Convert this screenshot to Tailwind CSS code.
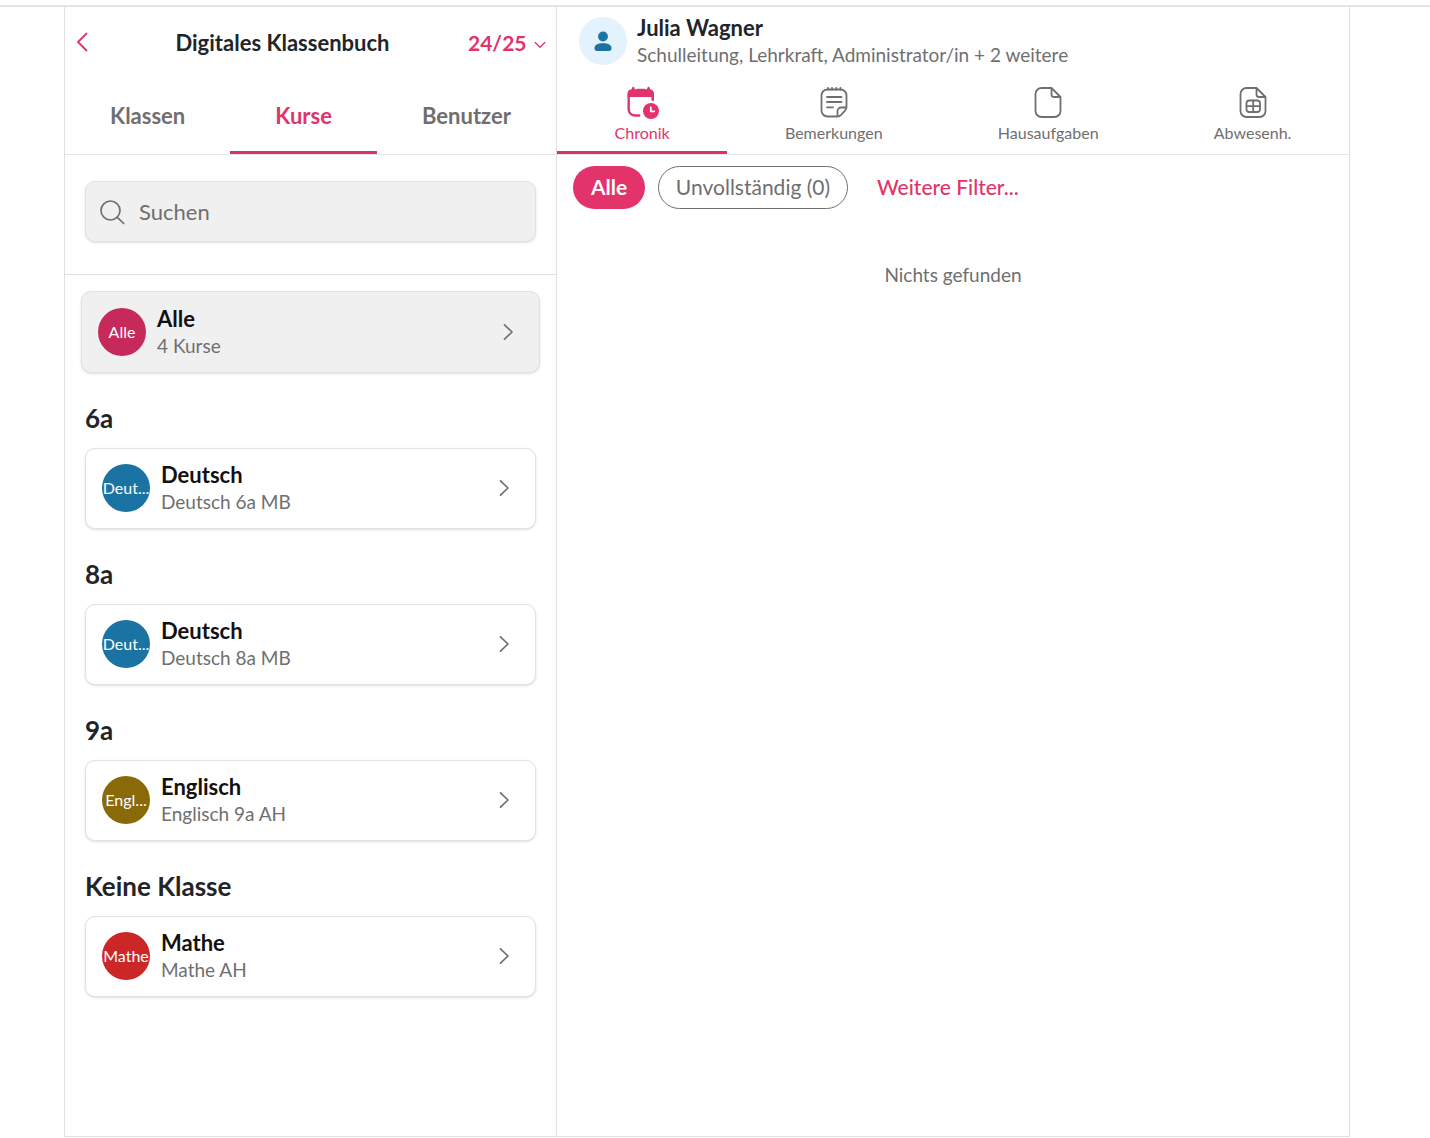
<!DOCTYPE html>
<html lang="de">
<head>
    <meta charset="UTF-8">
    <meta name="viewport" content="width=device-width, initial-scale=1.0">
    <title>Digitales Klassenbuch</title>
    <script src="https://cdn.jsdelivr.net/npm/@tailwindcss/browser@4"></script>
</head>
<body class="min-h-screen bg-white font-['Lato',sans-serif] text-[#212529] flex flex-col pt-[5px] pb-px">
    <div class="flex-1 flex flex-col border-t-2 border-[#e4e4e4] pl-16 pr-20">
        <div class="flex-1 flex border border-t-0 border-[#e0e0e0]">

            <!-- Course list -->
            <aside class="w-[492px] shrink-0 border-r border-[#e0e0e0]">
                <header class="h-[148px] flex flex-col border-b border-[#e4e4e4]">
                    <div class="h-[72px] flex items-center">
                        <button type="button" aria-label="Zurück" class="w-8 h-8 pl-[11px] pb-0.5 flex items-center text-[#e2336b]">
                            <svg class="w-3 h-5" viewBox="0 0 12 20" fill="none" stroke="currentColor" stroke-width="1.8" stroke-linecap="round" stroke-linejoin="round"><path d="M10.5 1.5 2 10l8.5 8.5"/></svg>
                        </button>
                        <h1 class="flex-1 text-center text-[22px] leading-7 font-bold">Digitales Klassenbuch</h1>
                        <div class="relative w-[88px] text-[#e2336b]">
                            <select aria-label="Schuljahr" class="block appearance-none w-full bg-transparent text-[21px] leading-7 font-bold">
                                <option>24/25</option>
                            </select>
                            <svg class="absolute right-2.5 top-2.5 w-3 h-3 pointer-events-none" viewBox="0 0 12 12" fill="none" stroke="currentColor" stroke-width="1.3" stroke-linecap="round" stroke-linejoin="round"><path d="M1.2 3.5 6 8.3l4.8-4.8"/></svg>
                        </div>
                    </div>
                    <nav class="flex-1 flex text-[22px] leading-7 font-bold text-[#6f6f6f]">
                        <a href="#" class="flex-auto flex items-center justify-center pt-0.5 border-b-3 border-transparent">Klassen</a>
                        <a href="#" class="flex-auto flex items-center justify-center pt-0.5 border-b-3 border-[#d6336b] text-[#e2336b]">Kurse</a>
                        <a href="#" class="flex-auto flex items-center justify-center pt-0.5 border-b-3 border-transparent">Benutzer</a>
                    </nav>
                </header>

                <div class="h-[120px] px-5 pt-[26px] border-b border-[#e0e0e0]">
                    <div class="h-[61px] flex items-center rounded-[10px] border border-[#e2e2e2] bg-[#f0f0f0] shadow-sm pl-[13px] pr-4 gap-3.5">
                        <svg class="w-[26px] h-[26px] shrink-0 text-[#6f6f6f]" viewBox="0 0 26 26" fill="none" stroke="currentColor" stroke-width="1.7" stroke-linecap="round"><circle cx="11.5" cy="11.5" r="9.5"/><path d="m18.3 18.3 6.4 6.2"/></svg>
                        <input type="text" aria-label="Suchen" placeholder="Suchen" class="flex-1 min-w-0 bg-transparent outline-none text-[22px] leading-7 placeholder:text-[#6f6f6f]">
                    </div>
                </div>

                <div class="px-4 pt-4">
                    <button type="button" class="w-full h-[82px] flex items-center text-left rounded-[10px] border border-[#e2e2e2] bg-[#f0f0f0] shadow-sm px-4">
                        <span class="w-12 h-12 shrink-0 rounded-full bg-[#c62a5a] text-white text-base flex items-center justify-center">Alle</span>
                        <span class="flex-1 ml-[11px]">
                            <span class="block text-[22px] leading-7 font-bold text-[#111]">Alle</span>
                            <span class="block text-[19px] leading-[26px] text-[#6f6f6f]">4 Kurse</span>
                        </span>
                        <svg class="w-5 h-5 mr-[5px] text-[#6f6f6f]" viewBox="0 0 20 20" fill="none" stroke="currentColor" stroke-width="1.7" stroke-linecap="round" stroke-linejoin="round"><path d="m6.5 2.8 7.5 7.2-7.5 7.2"/></svg>
                    </button>
                </div>

                <div id="groups" class="px-5 pb-8"></div>
            </aside>

            <!-- Person -->
            <main class="flex-1 min-w-0">
                <header class="h-[148px] flex flex-col border-b border-[#e4e4e4]">
                    <div class="h-[70px] flex items-center pl-[22px] pb-[3px] gap-2.5">
                        <span class="w-12 h-12 shrink-0 rounded-full bg-[#e3f2fd] text-[#1a73a2] flex items-center justify-center">
                            <svg class="w-6 h-6" viewBox="0 0 24 24" fill="currentColor"><circle cx="12" cy="7.5" r="4.9"/><path d="M3.5 19.3c0-3.500 3-5 8.500-5s8.500 1.500 8.500 5c0 1.600-.9 2.700-2.400 2.700H5.900c-1.500 0-2.400-1.100-2.400-2.700Z"/></svg>
                        </span>
                        <div>
                            <h2 class="text-[22px] leading-7 font-bold">Julia Wagner</h2>
                            <p class="text-[19px] leading-[26px] text-[#6f6f6f]">Schulleitung, Lehrkraft, Administrator/in + 2 weitere</p>
                        </div>
                    </div>
                    <nav class="flex-1 flex text-base leading-5 text-[#6f6f6f]">
                        <a href="#" class="flex-auto flex flex-col items-center pt-2 gap-0.5 border-b-3 border-[#d6336b] text-[#e2336b]">
                            <svg class="w-9 h-9" viewBox="0 0 36 36" fill="none">
                                <path d="M3.500 12V8.500c0-2.400 1.500-4 4-4.300L8.200 2.600a1.200 1.200 0 0 1 2.300.4l.2 1.200h1.500l1-.5h7.400l1 .5h1.500l.2-1.200a1.200 1.200 0 0 1 2.300-.4l.7 1.600c2.300.4 3.700 1.900 3.700 4.300v7.800c-.9-.6-1.700-.9-2.600-1.100V12Z" fill="currentColor"/>
                                <path d="M4.700 11v13.500a6 6 0 0 0 6 6h4.500" stroke="currentColor" stroke-width="2.400" stroke-linecap="round"/>
                                <circle cx="27" cy="26" r="8" fill="currentColor"/>
                                <path d="M26.800 22.500v3.800h3.400" stroke="#fff" stroke-width="1.800" stroke-linecap="round" stroke-linejoin="round"/>
                            </svg>
                            Chronik
                        </a>
                        <a href="#" class="flex-auto flex flex-col items-center pt-2 gap-0.5 border-b-3 border-transparent">
                            <svg class="w-9 h-9" viewBox="0 0 36 36" fill="none" stroke="currentColor" stroke-width="1.8" stroke-linecap="round" stroke-linejoin="round">
                                <path d="M30.500 22V10.500a6 6 0 0 0-6-6h-13a6 6 0 0 0-6 6v15a6 6 0 0 0 6 6h9.800c1.700 0 2.600-.5 3.800-1.700l3.700-3.900c1.200-1.200 1.700-2.200 1.700-3.900ZM21.500 31.200V26a3.500 3.500 0 0 1 3.500-3.500h5.200"/>
                                <path d="M12 4.500V2.800M16 4.500V2.800M20.300 4.500V2.800M24.500 4.500V2.800M11 12h14.500M11 17h14.500M11 22.300h6"/>
                            </svg>
                            Bemerkungen
                        </a>
                        <a href="#" class="flex-auto flex flex-col items-center pt-2 gap-0.5 border-b-3 border-transparent">
                            <svg class="w-9 h-9" viewBox="0 0 36 36" fill="none" stroke="currentColor" stroke-width="1.8" stroke-linecap="round" stroke-linejoin="round">
                                <path d="M21.500 3H11.500a6 6 0 0 0-6 6v17a6 6 0 0 0 6 6h13a6 6 0 0 0 6-6V12ZM21.500 3v6.500A2.500 2.500 0 0 0 24 12h6.500"/>
                            </svg>
                            Hausaufgaben
                        </a>
                        <a href="#" class="flex-auto flex flex-col items-center pt-2 gap-0.5 border-b-3 border-transparent">
                            <svg class="w-9 h-9" viewBox="0 0 36 36" fill="none" stroke="currentColor" stroke-width="1.8" stroke-linecap="round" stroke-linejoin="round">
                                <path d="M21.500 3H11.500a6 6 0 0 0-6 6v17a6 6 0 0 0 6 6h13a6 6 0 0 0 6-6V12ZM21.500 3v6.500A2.500 2.500 0 0 0 24 12h6.500"/>
                                <rect x="11.500" y="15.500" width="13.500" height="11.500" rx="2.800"/>
                                <path d="M11.500 21.200H25M18.200 15.500V27"/>
                            </svg>
                            Abwesenh.
                        </a>
                    </nav>
                </header>

                <div class="flex items-center px-4 pt-[11px] text-[21px] leading-7">
                    <button type="button" class="h-[43px] w-[72px] pb-0.5 rounded-full bg-[#e2336b] text-white font-bold">Alle</button>
                    <button type="button" class="h-[43px] w-[190px] pb-0.5 ml-[13px] rounded-full border border-[#6f6f6f] text-[#6f6f6f]">Unvollständig (0)</button>
                    <button type="button" class="h-[43px] pb-0.5 ml-[29px] font-medium text-[#e2336b]">Weitere Filter...</button>
                </div>

                <p class="mt-[53px] text-center text-[19px] leading-[26px] text-[#6f6f6f]">Nichts gefunden</p>
            </main>
        </div>
    </div>

    <script>
        const groups = [
            { name: '6a', short: 'Deut...', color: 'bg-[#1a73a2]', title: 'Deutsch', sub: 'Deutsch 6a MB' },
            { name: '8a', short: 'Deut...', color: 'bg-[#1a73a2]', title: 'Deutsch', sub: 'Deutsch 8a MB' },
            { name: '9a', short: 'Engl...', color: 'bg-[#8a6a08]', title: 'Englisch', sub: 'Englisch 9a AH' },
            { name: 'Keine Klasse', short: 'Mathe', color: 'bg-[#cc2727]', title: 'Mathe', sub: 'Mathe AH' }
        ];

        document.getElementById('groups').innerHTML = groups.map(g => `
            <section>
                <h2 class="pt-[27px] pb-3 text-[26px] leading-9 font-bold">${g.name}</h2>
                <button type="button" class="w-full h-[81px] pb-px flex items-center text-left rounded-[10px] border border-[#e2e2e2] bg-white shadow-sm px-4">
                    <span class="w-12 h-12 shrink-0 rounded-full ${g.color} text-white text-base flex items-center justify-center overflow-hidden">${g.short}</span>
                    <span class="flex-1 ml-[11px]">
                        <span class="block text-[22px] leading-7 font-bold text-[#111]">${g.title}</span>
                        <span class="block text-[19px] leading-[26px] text-[#6f6f6f]">${g.sub}</span>
                    </span>
                    <svg class="w-5 h-5 mr-[5px] text-[#6f6f6f]" viewBox="0 0 20 20" fill="none" stroke="currentColor" stroke-width="1.7" stroke-linecap="round" stroke-linejoin="round"><path d="m6.5 2.8 7.5 7.2-7.5 7.2"/></svg>
                </button>
            </section>
        `).join('');
    </script>
</body>
</html>
